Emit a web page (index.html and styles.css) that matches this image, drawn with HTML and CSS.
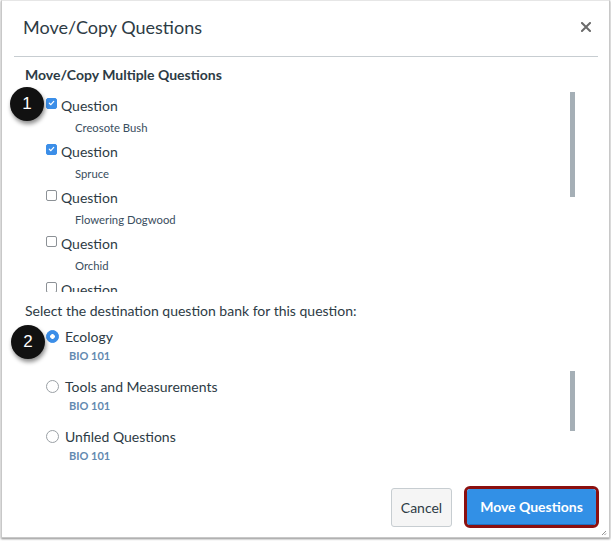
FILE: index.html
```html
<!DOCTYPE html>
<html>
<head>
<meta charset="utf-8">
<link rel="stylesheet" href="styles.css">
</head>
<body>
<div class="dialog">
  <div class="header">
    <h1 class="title">Move/Copy Questions</h1>
    <svg class="close" viewBox="0 0 10 10"><path d="M1 1 L9 9 M9 1 L1 9" stroke="#6b6b6b" stroke-width="2" stroke-linecap="square"/></svg>
  </div>
  <div class="body">
    <h2 class="section-title">Move/Copy Multiple Questions</h2>
    <div class="scroll-box q-box">
      <ul class="items">
        <li class="q-item">
          <label class="q-label"><span class="cb checked"><svg viewBox="0 0 12 12"><path d="M3 6.2 L5.1 8.3 L9 3.8" fill="none" stroke="#fff" stroke-width="1.6" stroke-linecap="round" stroke-linejoin="round"/></svg></span>Question</label>
          <div class="q-sub">Creosote Bush</div>
        </li>
        <li class="q-item">
          <label class="q-label"><span class="cb checked"><svg viewBox="0 0 12 12"><path d="M3 6.2 L5.1 8.3 L9 3.8" fill="none" stroke="#fff" stroke-width="1.6" stroke-linecap="round" stroke-linejoin="round"/></svg></span>Question</label>
          <div class="q-sub">Spruce</div>
        </li>
        <li class="q-item">
          <label class="q-label"><span class="cb"></span>Question</label>
          <div class="q-sub">Flowering Dogwood</div>
        </li>
        <li class="q-item">
          <label class="q-label"><span class="cb"></span>Question</label>
          <div class="q-sub">Orchid</div>
        </li>
        <li class="q-item">
          <label class="q-label"><span class="cb"></span>Question</label>
          <div class="q-sub">Saguaro</div>
        </li>
      </ul>
      <div class="thumb q-thumb"></div>
    </div>
    <p class="prompt">Select the destination question bank for this question:</p>
    <div class="scroll-box r-box">
      <ul class="items">
        <li class="r-item">
          <label class="r-label"><span class="radio checked"></span>Ecology</label>
          <div class="r-sub">BIO 101</div>
        </li>
        <li class="r-item">
          <label class="r-label"><span class="radio"></span>Tools and Measurements</label>
          <div class="r-sub">BIO 101</div>
        </li>
        <li class="r-item">
          <label class="r-label"><span class="radio"></span>Unfiled Questions</label>
          <div class="r-sub">BIO 101</div>
        </li>
      </ul>
      <div class="thumb r-thumb"></div>
    </div>
  </div>
  <div class="footer">
    <button class="btn btn-cancel">Cancel</button>
    <span class="focus-ring"><button class="btn btn-primary">Move Questions</button></span>
  </div>
  <svg class="grip" viewBox="0 0 6 6"><path d="M1 5 L5 1 M3.5 5 L5 3.5" stroke="#777" stroke-width="0.8"/></svg>
  <span class="badge badge-1">1</span>
  <span class="badge badge-2">2</span>
</div>
</body>
</html>
```
FILE: styles.css
```css
* { box-sizing: border-box; }
html, body { margin: 0; padding: 0; background: #ffffff; }
body {
  font-family: Lato, "Open Sans", "Liberation Sans", sans-serif;
  color: #2d3b45;
  width: 611px;
  height: 541px;
  overflow: hidden;
}
.dialog {
  position: relative;
  margin-left: 1px;
  width: 609px;
  height: 538px;
  background: #fff;
  border: 1px solid #c8c8c8;
  border-top-color: #e6e6e6;
  box-shadow: 0 1px 2px rgba(0,0,0,0.45);
  display: flex;
  flex-direction: column;
}
.header {
  height: 56px;
  margin: 0 11px 0 12px;
  border-bottom: 1px solid #c7cdd1;
  display: flex;
  align-items: center;
  justify-content: space-between;
  padding: 0 7px 3px 9px;
}
.title {
  margin: 0;
  font-size: 18px;
  font-weight: 400;
  color: #2d3b45;
}
.close {
  width: 10px;
  height: 10px;
}
.body {
  padding: 9px 0 0 23px;
  flex: 1;
}
.section-title {
  margin: 0;
  font-size: 14px;
  line-height: 18px;
  font-weight: 700;
  color: #2d3b45;
}
.scroll-box {
  display: flex;
  overflow: hidden;
}
.items {
  list-style: none;
  margin: 0;
  padding: 0 0 0 21px;
  flex: 1;
}
.q-box {
  height: 202px;
  margin-top: 6px;
  padding-top: 5px;
}
.q-item { height: 46px; }
.q-label, .r-label {
  display: flex;
  align-items: center;
  height: 20px;
  font-size: 14px;
  color: #2d3b45;
}
.cb {
  width: 11px;
  height: 11px;
  border: 1px solid #8c9196;
  border-radius: 2px;
  margin-right: 4px;
  margin-top: -4px;
  display: inline-flex;
  align-items: center;
  justify-content: center;
  background: #fff;
}
.cb.checked {
  background: #3b8ee8;
  border-color: #3b8ee8;
}
.cb svg { width: 10px; height: 10px; }
.q-sub {
  margin-top: 3px;
  padding-left: 29px;
  line-height: 20px;
  font-size: 11.3px;
  color: #3a4e60;
}
.thumb {
  width: 5px;
  background: #a5afb6;
  margin-right: 34px;
  flex: none;
}
.q-thumb { height: 105px; margin-top: -3px; }
.prompt {
  margin: 10px 0 0;
  font-size: 14px;
  line-height: 18px;
  color: #2d3b45;
}
.r-box {
  height: 160px;
  margin-top: 2px;
  padding-top: 4px;
}
.r-item { height: 50px; }
.radio {
  width: 13px;
  height: 13px;
  border-radius: 50%;
  border: 1px solid #9aa0a5;
  margin-right: 6px;
  background: #fff;
  display: inline-block;
}
.radio.checked {
  background: #3b8ee8 radial-gradient(circle, #fff 0 2px, transparent 2.6px);
  border-color: #3b8ee8;
}
.r-sub {
  padding-left: 23px;
  line-height: 20px;
  font-size: 11px;
  font-weight: 700;
  color: #6389b0;
}
.r-thumb { height: 60px; margin-top: 45px; }
.footer {
  display: flex;
  justify-content: flex-end;
  align-items: center;
  gap: 12px;
  padding: 0 10px 9px 0;
}
.btn {
  font-family: Lato, "Open Sans", "Liberation Sans", sans-serif;
  font-size: 14px;
  height: 39px;
  border-radius: 3px;
  cursor: pointer;
}
.btn-cancel {
  width: 61px;
  background: #f5f5f5;
  border: 1px solid #c7cdd1;
  color: #2d3b45;
  padding: 0;
}
.focus-ring {
  display: inline-flex;
  border: 3px solid #8b1010;
  border-radius: 6px;
}
.btn-primary {
  width: 129px;
  height: 36px;
  background: #3290e6;
  border: none;
  border-bottom: 1px solid #1f6fc0;
  color: #fff;
  font-weight: 700;
  padding: 0;
  border-radius: 3px;
}
.grip {
  position: absolute;
  right: 2px;
  bottom: 1px;
  width: 6px;
  height: 6px;
}
.badge {
  position: absolute;
  width: 34px;
  height: 34px;
  border-radius: 50%;
  background: #111;
  color: #fff;
  font-size: 17px;
  display: flex;
  align-items: center;
  justify-content: center;
  box-shadow: 1px 3px 4px rgba(0,0,0,0.45);
  font-family: "Liberation Sans", Arial, sans-serif;
}
.badge-1 { left: 8px; top: 86px; }
.badge-2 { left: 9px; top: 324px; }
```
